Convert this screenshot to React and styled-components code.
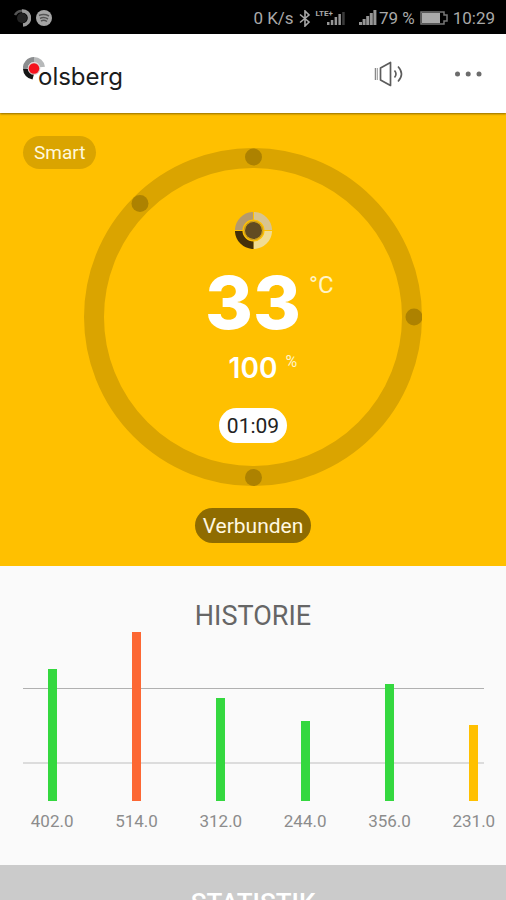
import React from 'react'
import styled, { createGlobalStyle } from 'styled-components'

const COLOR = {
    amber: '#ffc000',
    ring: '#daa400',
    ringDot: '#ad8200',
    connected: '#8f6c00',
    green: '#34d83f',
    orange: '#fc6733',
    statusText: '#a9a9a9',
    paper: '#fafafa',
    footer: '#cbcbcb',
}

const HISTORY = [
    { value: 402, color: COLOR.green },
    { value: 514, color: COLOR.orange },
    { value: 312, color: COLOR.green },
    { value: 244, color: COLOR.green },
    { value: 356, color: COLOR.green },
    { value: 231, color: COLOR.amber },
]
const HISTORY_MAX = 514

const GlobalStyle = createGlobalStyle`
    body {
        margin: 0;
        background-color: ${COLOR.paper};
        font-family: Roboto, "Liberation Sans", sans-serif;
    }
    * {
        box-sizing: border-box;
    }
`

const Screen = styled.div`
    display: flex;
    flex-direction: column;
    height: 100vh;
`
const StatusBar = styled.div`
    flex: none;
    display: flex;
    align-items: center;
    justify-content: space-between;
    height: 34px;
    padding: 2px 11px 0 13px;
    background-color: #000;
    color: ${COLOR.statusText};
    font-size: 17px;
    line-height: 20px;
    svg {
        display: block;
    }
`
const StatusGroup = styled.div`
    display: flex;
    align-items: center;
    gap: ${({ $gap }) => $gap}px;
`
const Header = styled.header`
    position: relative;
    z-index: 1;
    flex: none;
    display: flex;
    align-items: center;
    justify-content: space-between;
    height: 79px;
    padding: 0 23px;
    background-color: #fff;
    box-shadow: 0 1px 2px rgba(0, 0, 0, 0.45);
`
const Brand = styled.a`
    display: flex;
    align-items: center;
    color: #1c1c1c;
    text-decoration: none;
    svg {
        margin: 0 -7px 10px 0;
    }
`
const BrandName = styled.span`
    font-family: Inter, sans-serif;
    font-size: 24px;
    line-height: 28px;
    margin-top: 7px;
`
const Actions = styled.div`
    display: flex;
    align-items: center;
    gap: 48px;
`
const IconButton = styled.button`
    display: flex;
    padding: 0;
    border: 0;
    background: none;
    cursor: pointer;
`
const Content = styled.main`
    flex: 1;
    min-height: 0;
    overflow-x: hidden;
    overflow-y: auto;
    scrollbar-width: none;
`
const Stove = styled.section`
    position: relative;
    display: flex;
    flex-direction: column;
    align-items: center;
    gap: 22px;
    padding: 35px 23px 23px;
    background-color: ${COLOR.amber};
`
const Pill = styled.span`
    display: flex;
    align-items: center;
    justify-content: center;
    height: 35px;
    padding: 0 8px;
    border-radius: 18px;
    background-color: ${({ $bg }) => $bg};
    color: ${({ $fg }) => $fg};
    font-size: 21px;
    line-height: 24px;
`
const ModeButton = styled.button`
    position: absolute;
    top: 23px;
    left: 23px;
    height: 33px;
    padding: 0 11px;
    border: 0;
    border-radius: 17px;
    background-color: ${COLOR.ring};
    color: #fff8dc;
    font-family: inherit;
    font-size: 19px;
    line-height: 24px;
    cursor: pointer;
`
const Dial = styled.div`
    display: grid;
    width: 338px;
    > * {
        grid-area: 1 / 1;
    }
    > svg {
        display: block;
        width: 100%;
    }
`
const Readings = styled.div`
    display: flex;
    flex-direction: column;
    align-items: center;
    padding-top: 64px;
`
const Reading = styled.div`
    display: grid;
    grid-template-columns: 1fr auto 1fr;
    column-gap: 8px;
    align-self: stretch;
    color: #fff;
    font-family: Inter, sans-serif;
`
const Temperature = styled(Reading)`
    margin-top: 26px;
    font-size: 73px;
    font-weight: 800;
    line-height: 56px;
`
const Power = styled(Reading)`
    margin: 25px 0 28px;
    font-size: 28px;
    font-weight: 600;
    line-height: 24px;
`
const Unit = styled.span`
    grid-column: 3;
    font-family: Roboto, sans-serif;
    font-size: ${({ $size }) => $size}px;
    font-weight: 400;
    line-height: 20px;
    color: #fff4c8;
`
const PowerUnit = styled(Unit)`
    line-height: 12px;
`
const Value = styled.span`
    grid-column: 2;
`
const History = styled.section`
    padding: 34px 0;
    background-color: ${COLOR.paper};
`
const Title = styled.h2`
    margin: 0;
    color: #666;
    font-size: 27px;
    font-weight: 400;
    line-height: 32px;
    text-align: center;
`
const StatisticsTitle = styled(Title)`
    color: #fff;
    font-size: 26px;
    font-weight: 500;
`
const Chart = styled.div`
    position: relative;
`
const GridLine = styled.div`
    position: absolute;
    top: ${({ $top }) => $top}px;
    left: 23px;
    right: 22px;
    height: ${({ $weight }) => $weight}px;
    background-color: ${({ $color }) => $color};
`
const Bars = styled.ol`
    position: relative;
    display: grid;
    grid-template-columns: repeat(6, 1fr);
    margin: 0 -10px 0 10px;
    padding: 0;
    list-style: none;
`
const BarItem = styled.li`
    display: flex;
    flex-direction: column;
    align-items: center;
`
const Track = styled.div`
    display: flex;
    align-items: flex-end;
    height: 169px;
`
const Bar = styled.div`
    width: 9px;
    background-color: ${({ $color }) => $color};
`
const BarLabel = styled.span`
    margin-top: 10px;
    color: #8c8c8c;
    font-size: 17px;
    line-height: 20px;
`
const Statistics = styled.section`
    padding: 22px 0 34px;
    background-color: ${COLOR.footer};
`

function BrandMark() {
    return (
        <svg width="22" height="23" viewBox="0 0 22 23" aria-hidden="true">
            <path d="M2.500 12A8.500 8.500 0 0 1 11 2.500" fill="none" stroke="#8b8d8f" strokeWidth="5" />
            <path d="M11 2.500A8.500 8.500 0 0 1 19.500 10" fill="none" stroke="#b7b9ba" strokeWidth="5" />
            <path d="M0 12H5A7 7 0 0 0 11 17L9.500 22.500A11 11 0 0 1 0 12Z" fill="#151515" />
            <circle cx="11" cy="11.500" r="6.300" fill="#dcc8c8" />
            <circle cx="11" cy="11.500" r="5.200" fill="#f5121d" />
        </svg>
    )
}

function Emblem() {
    return (
        <svg width="37" height="37" viewBox="0 0 37 37" aria-hidden="true">
            <g fill="none" strokeWidth="7.500">
                <path d="M3.700 18.500A14.800 14.800 0 0 1 18.500 3.700" stroke="#b59a6c" />
                <path d="M18.500 3.700A14.800 14.800 0 0 1 33.300 18.500" stroke="#d9c48f" />
                <path d="M33.300 18.500A14.800 14.800 0 0 1 18.500 33.300" stroke="#f1dc93" />
                <path d="M18.500 33.300A14.800 14.800 0 0 1 3.700 18.500" stroke="#44300a" />
            </g>
            <path d="M0 18.500H37M18.500 0V18.500" stroke={COLOR.amber} strokeWidth="1" />
            <circle cx="18.500" cy="18.500" r="10.500" fill={COLOR.amber} />
            <circle cx="18.500" cy="18.500" r="9.300" fill="none" stroke="#b18d35" strokeWidth="0.800" />
            <circle cx="18.500" cy="18.500" r="8.500" fill="#614b22" />
        </svg>
    )
}

function Ring() {
    return (
        <svg viewBox="0 0 338 338" aria-hidden="true">
            <circle cx="169" cy="169" r="159" fill="none" stroke={COLOR.ring} strokeWidth="20" />
            <g fill={COLOR.ringDot}>
                <circle cx="169.500" cy="9" r="8.500" />
                <circle cx="330" cy="169" r="8.500" />
                <circle cx="169.500" cy="329.500" r="8.500" />
                <circle cx="56" cy="55.500" r="8.500" />
            </g>
        </svg>
    )
}

function Signal({ width, heights, fade }) {
    const step = width / heights.length
    return (
        <svg width={width} height="16" viewBox={`0 0 ${width} 16`} aria-hidden="true">
            {heights.map((h, i) => (
                <rect
                    key={i}
                    x={i * step}
                    y={15 - h}
                    width={step - (fade ? 1.3 : 0.6)}
                    height={h}
                    fill={fade && i === heights.length - 1 ? '#3a3a3a' : '#969696'}
                />
            ))}
        </svg>
    )
}

const NetworkType = styled.span`
    align-self: flex-start;
    margin-right: -6px;
    font-size: 8px;
    font-weight: 700;
    line-height: 8px;
`

function PhoneStatus() {
    return (
        <StatusBar>
            <StatusGroup $gap={5}>
                <svg width="18" height="18" viewBox="0 0 18 18" aria-hidden="true">
                    <circle cx="9" cy="9" r="5" fill="#222" />
                    <path d="M2 6A7.500 7.500 0 0 1 9 2" fill="none" stroke="#555" strokeWidth="2.500" />
                    <path d="M9 2A7 7 0 0 1 10 16" fill="none" stroke="#999" strokeWidth="3.500" />
                </svg>
                <svg width="16" height="16" viewBox="0 0 16 16" aria-hidden="true">
                    <circle cx="8" cy="8" r="8" fill="#a5a5a5" />
                    <path d="M3 5.500Q8 3.500 13 6M4 8.500Q8 6.500 12 9M5 11Q8 9.500 11 11.500" fill="none" stroke="#555" strokeWidth="1.500" />
                </svg>
            </StatusGroup>
            <StatusGroup $gap={5}>
                <span>0 K/s</span>
                <svg width="12" height="17" viewBox="0 0 12 17" aria-hidden="true">
                    <path d="M1 4.500L10 12L6 16V1L10 5L1 12.500" fill="none" stroke={COLOR.statusText} strokeWidth="1.600" />
                </svg>
                <StatusGroup $gap={0}>
                    <NetworkType>LTE+</NetworkType>
                    <Signal width={19} heights={[3, 5, 8, 11, 13]} fade />
                </StatusGroup>
                <StatusGroup $gap={2}>
                    <svg width="6" height="16" aria-hidden="true" />
                    <Signal width={18} heights={[3, 6, 9, 12, 15]} />
                    <span>79 %</span>
                </StatusGroup>
                <svg width="28" height="14" viewBox="0 0 28 14" aria-hidden="true">
                    <path d="M1 1H24V4H27V10H24V13H1Z" fill="none" stroke="#777" strokeWidth="1.500" />
                    <rect x="2" y="2" width="18" height="10" fill="#aaa" />
                </svg>
                <span>10:29</span>
            </StatusGroup>
        </StatusBar>
    )
}

function App() {
    return (
        <Screen>
            <GlobalStyle />
            <PhoneStatus />
            <Header>
                <Brand href="#">
                    <BrandMark />
                    <BrandName>olsberg</BrandName>
                </Brand>
                <Actions>
                    <IconButton aria-label="Ton">
                        <svg width="32" height="26" viewBox="0 0 32 26" fill="none" stroke="#5c5c5c">
                            <path d="M2.500 7V19" stroke="#888" strokeWidth="1.500" />
                            <path d="M4.500 7V19" stroke="#aaa" strokeWidth="1" />
                            <path d="M7.500 7L17.500 1.500V24.500L7.500 19Z" strokeWidth="1.700" strokeLinejoin="round" />
                            <path d="M21.500 9.500Q24.500 13 21.500 16.500M25 5.500Q32 13 25 20.500" strokeWidth="1.600" />
                        </svg>
                    </IconButton>
                    <IconButton aria-label="Menü">
                        <svg width="30" height="10" viewBox="0 0 30 10" fill="#6c6c6c">
                            <circle cx="4.500" cy="5" r="2.500" />
                            <circle cx="15.200" cy="5" r="2.500" />
                            <circle cx="26" cy="5" r="2.500" />
                        </svg>
                    </IconButton>
                </Actions>
            </Header>
            <Content>
                <Stove>
                    <ModeButton>Smart</ModeButton>
                    <Dial>
                        <Ring />
                        <Readings>
                            <Emblem />
                            <Temperature>
                                <Value>33</Value>
                                <Unit $size={24}>°C</Unit>
                            </Temperature>
                            <Power>
                                <Value>100</Value>
                                <PowerUnit $size={16}>%</PowerUnit>
                            </Power>
                            <Pill $bg="#fff" $fg="#222">01:09</Pill>
                        </Readings>
                    </Dial>
                    <Pill $bg={COLOR.connected} $fg="#fff8e0">Verbunden</Pill>
                </Stove>
                <History>
                    <Title>HISTORIE</Title>
                    <Chart>
                        <GridLine $top={56} $weight={1} $color="#b0b0b0" />
                        <GridLine $top={130} $weight={2} $color="#dcdcdc" />
                        <Bars>
                            {HISTORY.map(({ value, color }) => (
                                <BarItem key={value}>
                                    <Track>
                                        <Bar $color={color} style={{ height: `${(value / HISTORY_MAX) * 100}%` }} />
                                    </Track>
                                    <BarLabel>{value.toFixed(1)}</BarLabel>
                                </BarItem>
                            ))}
                        </Bars>
                    </Chart>
                </History>
                <Statistics>
                    <StatisticsTitle>STATISTIK</StatisticsTitle>
                </Statistics>
            </Content>
        </Screen>
    )
}

export default App
